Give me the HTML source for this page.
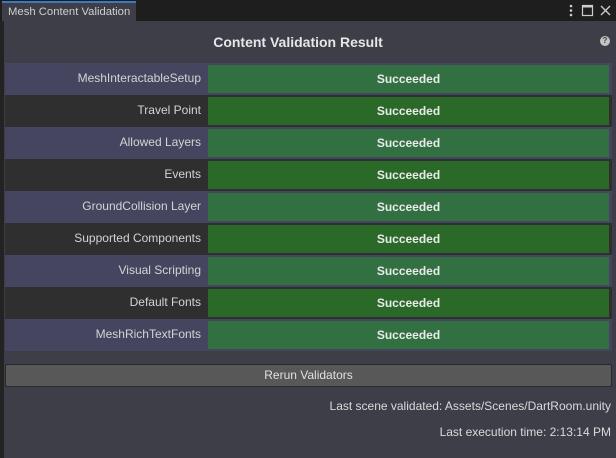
<!DOCTYPE html>
<html><head><style>
*{margin:0;padding:0;box-sizing:border-box}
body{width:616px;height:458px;background:#3e3e48;font-family:"Liberation Sans",sans-serif;position:relative;overflow:hidden;color:#d8d8d8}
.tabbar{position:absolute;left:0;top:0;width:616px;height:21px;background:#1e1e1e}
.tab{position:absolute;left:2px;top:1px;width:134px;height:21px;background:#3e3e48;border-top:2px solid #3a79bb;font-size:11.3px;color:#cfcfcf;padding:3px 0 0 6px;white-space:nowrap;overflow:hidden}
.lb{position:absolute;left:0;top:21px;width:4px;height:437px;background:#232323}
.title{position:absolute;left:0;width:596px;top:34px;text-align:center;font-weight:bold;font-size:14px;color:#e6e6e6}
.help{position:absolute;left:600px;top:36px;width:10px;height:10px;border-radius:50%;background:#c4c4c4;color:#3e3e48;font-size:8px;font-weight:bold;text-align:center;line-height:10px}
.row{position:absolute;left:5px;width:607px;height:32px}
.row .l{position:absolute;left:0;top:0;width:203px;height:32px;text-align:right;padding-right:7px;font-size:12px;line-height:31px;color:#d4d4d4;white-space:nowrap}
.row .g{position:absolute;left:203px;top:2px;width:401px;height:28px;text-align:center;font-size:12px;font-weight:bold;line-height:29px;color:#eaeaea}
.a{background:#454560}.a .g{background:#337041}
.b{background:#2f2f2f}.b .g{background:#2b6929}
.btn{position:absolute;left:5px;top:364px;width:607px;height:23px;background:#585858;border:1px solid #2a2a2a;border-radius:2px;text-align:center;font-size:12px;line-height:21px;color:#e0e0e0}
.info{position:absolute;right:5px;font-size:12px;color:#dadada;white-space:nowrap}
</style></head><body>
<div class="tabbar"><div class="tab">Mesh Content Validation</div>
<svg style="position:absolute;left:568px;top:3px" width="46" height="15"><circle cx="3" cy="3" r="1.3" fill="#ccc"/><circle cx="3" cy="7.5" r="1.3" fill="#ccc"/><circle cx="3" cy="12" r="1.3" fill="#ccc"/><rect x="14.5" y="2.5" width="10" height="10" fill="none" stroke="#ccc" stroke-width="1.2"/><rect x="14.5" y="2.5" width="10" height="2" fill="#ccc"/><path d="M33 3L42 12M42 3L33 12" stroke="#ccc" stroke-width="1.4"/></svg>
</div>
<div class="lb"></div>
<div class="title">Content Validation Result</div>
<div class="help">?</div>
<div class="row a" style="top:63px"><div class="l">MeshInteractableSetup</div><div class="g">Succeeded</div></div>
<div class="row b" style="top:95px"><div class="l">Travel Point</div><div class="g">Succeeded</div></div>
<div class="row a" style="top:127px"><div class="l">Allowed Layers</div><div class="g">Succeeded</div></div>
<div class="row b" style="top:159px"><div class="l">Events</div><div class="g">Succeeded</div></div>
<div class="row a" style="top:191px"><div class="l">GroundCollision Layer</div><div class="g">Succeeded</div></div>
<div class="row b" style="top:223px"><div class="l">Supported Components</div><div class="g">Succeeded</div></div>
<div class="row a" style="top:255px"><div class="l">Visual Scripting</div><div class="g">Succeeded</div></div>
<div class="row b" style="top:287px"><div class="l">Default Fonts</div><div class="g">Succeeded</div></div>
<div class="row a" style="top:319px"><div class="l">MeshRichTextFonts</div><div class="g">Succeeded</div></div>
<div class="btn">Rerun Validators</div>
<div class="info" style="top:399px">Last scene validated: Assets/Scenes/DartRoom.unity</div>
<div class="info" style="top:425px">Last execution time: 2:13:14 PM</div>
</body></html>
